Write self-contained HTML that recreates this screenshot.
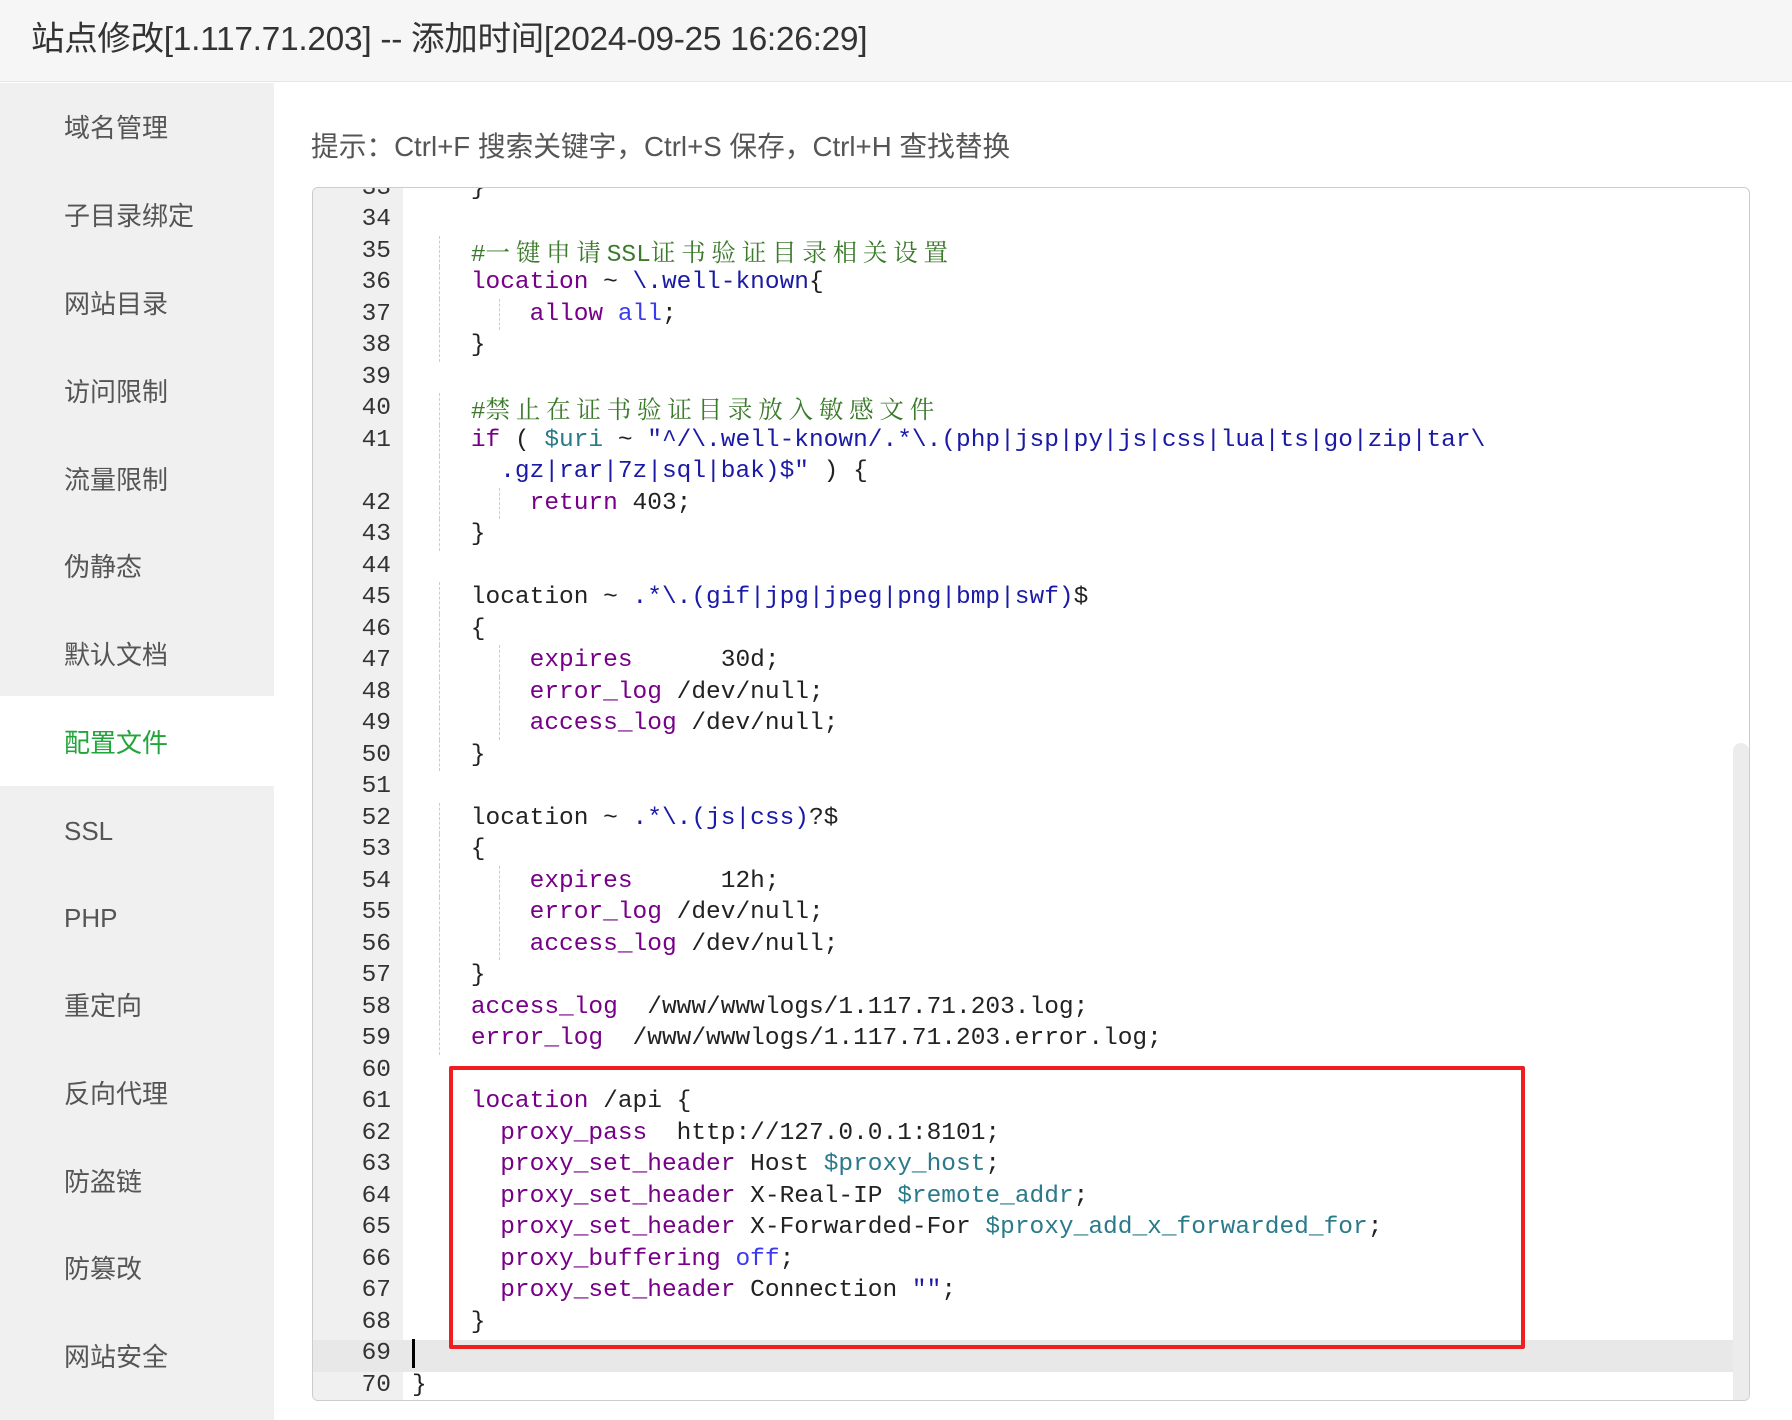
<!DOCTYPE html>
<html><head><meta charset="utf-8">
<style>
*{margin:0;padding:0;box-sizing:border-box}
body{width:1792px;height:1420px;background:#fff;position:relative;overflow:hidden;font-family:"Liberation Sans","Noto Sans CJK SC",sans-serif}
#hd{position:absolute;left:0;top:0;width:1792px;height:82px;background:#f6f6f6;border-bottom:1px solid #e6e6e6}
#hd span{position:absolute;left:31px;top:11px;font-size:33.5px;color:#333;letter-spacing:-0.3px}
#sb{position:absolute;left:0;top:83px;width:274px;height:1337px;background:#f0f0f0}
.it{position:absolute;left:64px;font-size:26px;color:#555;line-height:40px}
#act{position:absolute;left:0;top:613px;width:274px;height:90px;background:#fff}
#tip{position:absolute;left:311px;top:124px;font-size:27.7px;color:#555}
#ed{position:absolute;left:312px;top:187px;width:1438px;height:1214px;border:1px solid #ccc;border-radius:6px;overflow:hidden;background:#fff}
#gut{position:absolute;left:0;top:0;width:90px;height:100%;background:#f0f0f0}
#rows{position:absolute;left:0;top:1px;width:1420px;height:1212px}
.r{position:absolute;left:0;width:1420px;height:31.5px;line-height:31.5px;font-family:"Liberation Mono",monospace;font-size:24.5px;white-space:pre;color:#222}
.n{position:absolute;left:0;width:78px;text-align:right;color:#333}
.c{position:absolute;left:99px}
.g1,.g2{position:absolute;top:0;height:31.5px;border-left:1px dashed #ccc}
.g1{left:126px}.g2{left:186px}
.k{color:#770088}.b{color:#1a1aa6}.a{color:#3a3af0}.m{color:#3a7a2a}.v{color:#2a7a8a}
.cj{font-family:"Noto Serif CJK SC",serif;letter-spacing:5.8px}
#sc{position:absolute;left:1420px;top:555px;width:16px;height:680px;background:#ececec;border-radius:8px}
#red{position:absolute;left:449px;top:1066px;width:1076px;height:283px;border:4px solid #f01e1e;border-radius:2px}
</style></head><body>
<div id="hd"><span>站点修改[1.117.71.203] -- 添加时间[2024-09-25 16:26:29]</span></div>
<div id="sb">
<div id="act"></div>
</div>
<div class="it" style="top:108px">域名管理</div>
<div class="it" style="top:196px">子目录绑定</div>
<div class="it" style="top:284px">网站目录</div>
<div class="it" style="top:372px">访问限制</div>
<div class="it" style="top:460px">流量限制</div>
<div class="it" style="top:547px">伪静态</div>
<div class="it" style="top:635px">默认文档</div>
<div class="it" style="top:723px;color:#20a53a">配置文件</div>
<div class="it" style="top:811px">SSL</div>
<div class="it" style="top:898px">PHP</div>
<div class="it" style="top:986px">重定向</div>
<div class="it" style="top:1074px">反向代理</div>
<div class="it" style="top:1162px">防盗链</div>
<div class="it" style="top:1249px">防篡改</div>
<div class="it" style="top:1337px">网站安全</div>
<div id="tip">提示：Ctrl+F 搜索关键字，Ctrl+S 保存，Ctrl+H 查找替换</div>
<div id="ed">
<div id="gut"></div>
<div id="rows">
<div style="position:absolute;left:0;top:1151px;width:1420px;height:31.5px;background:#e8e8e8"></div>
<div class="r" style="top:-16.25px"><span class="n">33</span><span class="c">    }</span></div>
<div class="r" style="top:15.25px"><span class="n">34</span></div>
<div class="r" style="top:46.75px"><i class="g1"></i><span class="n">35</span><span class="c">    <span class="m">#<span class="cj">一键申请</span>SSL<span class="cj">证书验证目录相关设置</span></span></span></div>
<div class="r" style="top:78.25px"><i class="g1"></i><span class="n">36</span><span class="c">    <span class="k">location</span> ~ <span class="b">\.well-known</span>{</span></div>
<div class="r" style="top:109.75px"><i class="g1"></i><i class="g2"></i><span class="n">37</span><span class="c">        <span class="k">allow</span> <span class="a">all</span>;</span></div>
<div class="r" style="top:141.25px"><i class="g1"></i><span class="n">38</span><span class="c">    }</span></div>
<div class="r" style="top:172.75px"><span class="n">39</span></div>
<div class="r" style="top:204.25px"><i class="g1"></i><span class="n">40</span><span class="c">    <span class="m">#<span class="cj">禁止在证书验证目录放入敏感文件</span></span></span></div>
<div class="r" style="top:235.75px"><i class="g1"></i><span class="n">41</span><span class="c">    <span class="k">if</span> ( <span class="v">$uri</span> ~ <span class="b">"^/\.well-known/.*\.(php|jsp|py|js|css|lua|ts|go|zip|tar\</span></span></div>
<div class="r" style="top:267.25px"><i class="g1"></i><span class="c">      <span class="b">.gz|rar|7z|sql|bak)$"</span> ) {</span></div>
<div class="r" style="top:298.75px"><i class="g1"></i><i class="g2"></i><span class="n">42</span><span class="c">        <span class="k">return</span> 403;</span></div>
<div class="r" style="top:330.25px"><i class="g1"></i><span class="n">43</span><span class="c">    }</span></div>
<div class="r" style="top:361.75px"><span class="n">44</span></div>
<div class="r" style="top:393.25px"><i class="g1"></i><span class="n">45</span><span class="c">    location ~ <span class="b">.*\.(gif|jpg|jpeg|png|bmp|swf)</span>$</span></div>
<div class="r" style="top:424.75px"><i class="g1"></i><span class="n">46</span><span class="c">    {</span></div>
<div class="r" style="top:456.25px"><i class="g1"></i><i class="g2"></i><span class="n">47</span><span class="c">        <span class="k">expires</span>      30d;</span></div>
<div class="r" style="top:487.75px"><i class="g1"></i><i class="g2"></i><span class="n">48</span><span class="c">        <span class="k">error_log</span> /dev/null;</span></div>
<div class="r" style="top:519.25px"><i class="g1"></i><i class="g2"></i><span class="n">49</span><span class="c">        <span class="k">access_log</span> /dev/null;</span></div>
<div class="r" style="top:550.75px"><i class="g1"></i><span class="n">50</span><span class="c">    }</span></div>
<div class="r" style="top:582.25px"><span class="n">51</span></div>
<div class="r" style="top:613.75px"><i class="g1"></i><span class="n">52</span><span class="c">    location ~ <span class="b">.*\.(js|css)</span>?$</span></div>
<div class="r" style="top:645.25px"><i class="g1"></i><span class="n">53</span><span class="c">    {</span></div>
<div class="r" style="top:676.75px"><i class="g1"></i><i class="g2"></i><span class="n">54</span><span class="c">        <span class="k">expires</span>      12h;</span></div>
<div class="r" style="top:708.25px"><i class="g1"></i><i class="g2"></i><span class="n">55</span><span class="c">        <span class="k">error_log</span> /dev/null;</span></div>
<div class="r" style="top:739.75px"><i class="g1"></i><i class="g2"></i><span class="n">56</span><span class="c">        <span class="k">access_log</span> /dev/null;</span></div>
<div class="r" style="top:771.25px"><i class="g1"></i><span class="n">57</span><span class="c">    }</span></div>
<div class="r" style="top:802.75px"><i class="g1"></i><span class="n">58</span><span class="c">    <span class="k">access_log</span>  /www/wwwlogs/1.117.71.203.log;</span></div>
<div class="r" style="top:834.25px"><i class="g1"></i><span class="n">59</span><span class="c">    <span class="k">error_log</span>  /www/wwwlogs/1.117.71.203.error.log;</span></div>
<div class="r" style="top:865.75px"><span class="n">60</span></div>
<div class="r" style="top:897.25px"><span class="n">61</span><span class="c">    <span class="k">location</span> /api {</span></div>
<div class="r" style="top:928.75px"><span class="n">62</span><span class="c">      <span class="k">proxy_pass</span>  http://127.0.0.1:8101;</span></div>
<div class="r" style="top:960.25px"><span class="n">63</span><span class="c">      <span class="k">proxy_set_header</span> Host <span class="v">$proxy_host</span>;</span></div>
<div class="r" style="top:991.75px"><span class="n">64</span><span class="c">      <span class="k">proxy_set_header</span> X-Real-IP <span class="v">$remote_addr</span>;</span></div>
<div class="r" style="top:1023.25px"><span class="n">65</span><span class="c">      <span class="k">proxy_set_header</span> X-Forwarded-For <span class="v">$proxy_add_x_forwarded_for</span>;</span></div>
<div class="r" style="top:1054.75px"><span class="n">66</span><span class="c">      <span class="k">proxy_buffering</span> <span class="a">off</span>;</span></div>
<div class="r" style="top:1086.25px"><span class="n">67</span><span class="c">      <span class="k">proxy_set_header</span> Connection <span class="b">""</span>;</span></div>
<div class="r" style="top:1117.75px"><span class="n">68</span><span class="c">    }</span></div>
<div class="r" style="top:1149.25px"><span class="n">69</span><span class="c" style="border-left:3px solid #000;height:29px;top:1px"></span></div>
<div class="r" style="top:1180.75px"><span class="n">70</span><span class="c">}</span></div>
</div>
<div id="sc"></div>
</div>
<div id="red"></div>
</body></html>
